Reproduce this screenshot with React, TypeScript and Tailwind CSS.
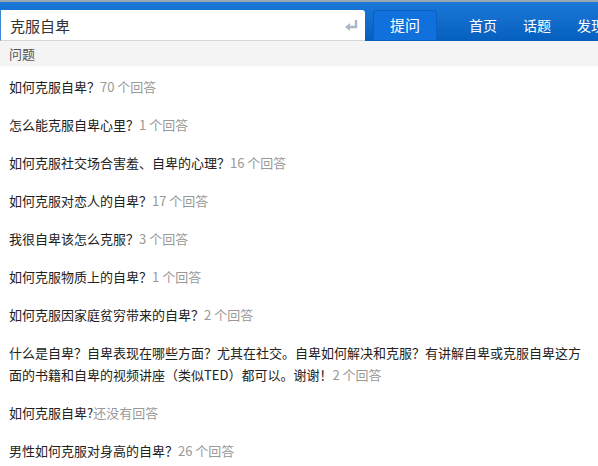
import React from "react";

const items: { q: string; n: string }[] = [
  { q: "如何克服自卑？", n: "70 个回答" },
  { q: "怎么能克服自卑心里？", n: "1 个回答" },
  { q: "如何克服社交场合害羞、自卑的心理？", n: "16 个回答" },
  { q: "如何克服对恋人的自卑？", n: "17 个回答" },
  { q: "我很自卑该怎么克服？", n: "3 个回答" },
  { q: "如何克服物质上的自卑？", n: "1 个回答" },
  { q: "如何克服因家庭贫穷带来的自卑？", n: "2 个回答" },
  {
    q: "什么是自卑？自卑表现在哪些方面？尤其在社交。自卑如何解决和克服？有讲解自卑或克服自卑这方面的书籍和自卑的视频讲座（类似TED）都可以。谢谢！",
    n: "2 个回答",
  },
  { q: "如何克服自卑?", n: "还没有回答" },
  { q: "男性如何克服对身高的自卑？", n: "26 个回答" },
];

export default function App() {
  return (
    <div
      className="w-[598px] h-[466px] overflow-hidden bg-white"
      style={{ fontFamily: '"Noto Sans CJK SC", "Liberation Sans", sans-serif' }}
    >
      <div className="h-[41px] border-t-2 border-[#9aa6b3] bg-gradient-to-b from-[#1b78d6] to-[#055fbf] flex items-end overflow-hidden">
        <div className="relative shrink-0 w-[365px] h-[31px] bg-white rounded-tr-[3px] border-b border-[#d6d6d6] border-l border-l-[#3c86d4] flex items-center">
          <span className="ml-[9px] text-[15px] text-[#333] leading-none">克服自卑</span>
          <svg className="absolute left-[344px] top-[10px]" width="14" height="11" viewBox="0 0 14 11">
            <path d="M11 0 V7 H3" fill="none" stroke="#a9b8c6" strokeWidth="2.4" />
            <path d="M0 7 L5 3 V11 Z" fill="#a9b8c6" />
          </svg>
        </div>
        <div className="shrink-0 ml-[8px] w-[64px] h-[31px] rounded-t-[3px] bg-[#1071dc] border border-[#0a5fc0] flex items-center justify-center text-white text-[15px]">
          提问
        </div>
        <div className="shrink-0 flex items-center h-[31px] ml-[32px] gap-[26px] text-white text-[14px] whitespace-nowrap">
          <span>首页</span>
          <span>话题</span>
          <span>发现</span>
        </div>
      </div>
      <div className="h-[25px] bg-[#f4f4f4] flex items-center pl-[9px] text-[13px] text-[#555]">问题</div>
      <div className="pt-[2px] pl-[9px] pr-[10px]">
        {items.map((it, i) => (
          <div key={i} className="py-[8px] text-[13px] leading-[22px] text-[#222]">
            {it.q}
            <span className="text-[#999]">{it.n}</span>
          </div>
        ))}
      </div>
    </div>
  );
}
